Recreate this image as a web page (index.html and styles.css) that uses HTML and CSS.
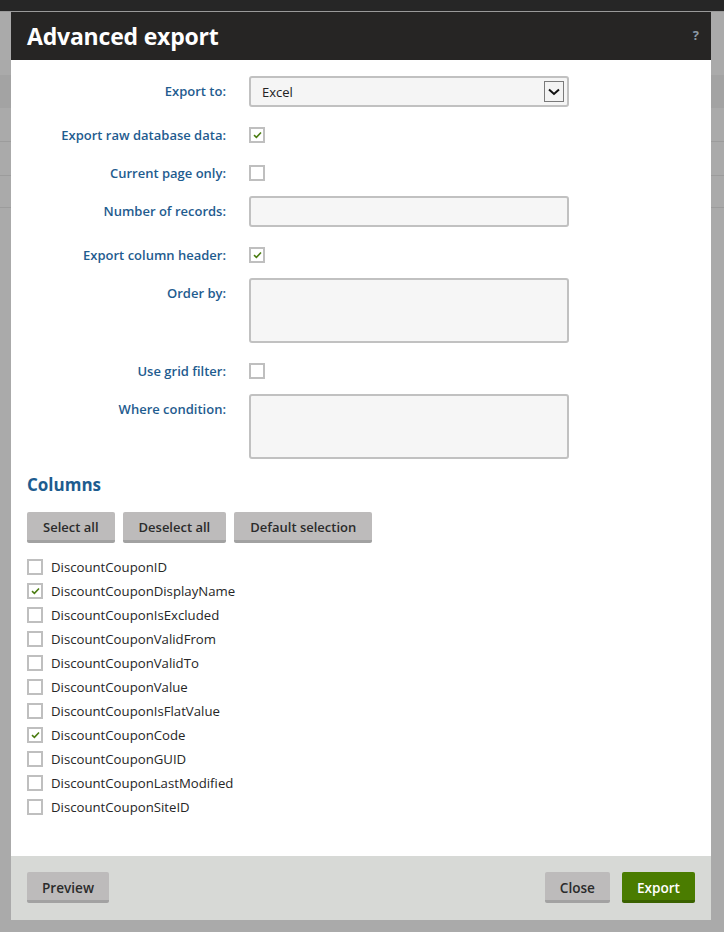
FILE: index.html
```html
<!DOCTYPE html>
<html>
<head>
<meta charset="utf-8">
<link rel="stylesheet" href="styles.css">
</head>
<body>
<div class="topbar"></div>
<div class="modal">
  <div class="mhead">
    <h1 class="title">Advanced export</h1>
    <span class="help">?</span>
  </div>
  <div class="mbody">
    <div class="form">
      <div class="row ctl">
        <label class="lbl">Export to:</label>
        <div class="select"><span class="sel-text">Excel</span><span class="sel-arrow"><svg width="12" height="8" viewBox="0 0 12 8"><path d="M1 1.5 L6 6 L11 1.5" fill="none" stroke="#111" stroke-width="2"/></svg></span></div>
      </div>
      <div class="row chk">
        <label class="lbl">Export raw database data:</label>
        <span class="cb on"><svg width="9" height="8" viewBox="0 0 9 8"><path d="M1 4.2 L3.4 6.4 L8 1.5" fill="none" stroke="#4c7d12" stroke-width="1.6"/></svg></span>
      </div>
      <div class="row chk">
        <label class="lbl">Current page only:</label>
        <span class="cb"></span>
      </div>
      <div class="row ctl">
        <label class="lbl">Number of records:</label>
        <div class="input"></div>
      </div>
      <div class="row chk">
        <label class="lbl">Export column header:</label>
        <span class="cb on"><svg width="9" height="8" viewBox="0 0 9 8"><path d="M1 4.2 L3.4 6.4 L8 1.5" fill="none" stroke="#4c7d12" stroke-width="1.6"/></svg></span>
      </div>
      <div class="row ctl">
        <label class="lbl">Order by:</label>
        <div class="input area"></div>
      </div>
      <div class="row chk">
        <label class="lbl">Use grid filter:</label>
        <span class="cb"></span>
      </div>
      <div class="row ctl">
        <label class="lbl">Where condition:</label>
        <div class="input area"></div>
      </div>
    </div>

    <h2 class="colhead">Columns</h2>
    <div class="btnrow">
      <button class="btn">Select all</button>
      <button class="btn">Deselect all</button>
      <button class="btn">Default selection</button>
    </div>
    <ul class="cols">
      <li><span class="cb"></span>DiscountCouponID</li>
      <li><span class="cb on"><svg width="9" height="8" viewBox="0 0 9 8"><path d="M1 4.2 L3.4 6.4 L8 1.5" fill="none" stroke="#4c7d12" stroke-width="1.6"/></svg></span>DiscountCouponDisplayName</li>
      <li><span class="cb"></span>DiscountCouponIsExcluded</li>
      <li><span class="cb"></span>DiscountCouponValidFrom</li>
      <li><span class="cb"></span>DiscountCouponValidTo</li>
      <li><span class="cb"></span>DiscountCouponValue</li>
      <li><span class="cb"></span>DiscountCouponIsFlatValue</li>
      <li><span class="cb on"><svg width="9" height="8" viewBox="0 0 9 8"><path d="M1 4.2 L3.4 6.4 L8 1.5" fill="none" stroke="#4c7d12" stroke-width="1.6"/></svg></span>DiscountCouponCode</li>
      <li><span class="cb"></span>DiscountCouponGUID</li>
      <li><span class="cb"></span>DiscountCouponLastModified</li>
      <li><span class="cb"></span>DiscountCouponSiteID</li>
    </ul>
  </div>
  <div class="mfoot">
    <button class="fbtn">Preview</button>
    <div class="fright">
      <button class="fbtn">Close</button>
      <button class="fbtn primary">Export</button>
    </div>
  </div>
</div>
</body>
</html>
```
FILE: styles.css
```css
* { box-sizing: border-box; }
html, body { margin: 0; padding: 0; }
body {
  width: 724px;
  height: 932px;
  overflow: hidden;
  font-family: "Open Sans", "Noto Sans", sans-serif;
  background:
    linear-gradient(to bottom,
      transparent 0, transparent 75px,
      #a3a3a3 75px, #a3a3a3 108px,
      transparent 108px, transparent 141px,
      #9c9c9c 141px, #9c9c9c 142px,
      transparent 142px, transparent 175px,
      #9c9c9c 175px, #9c9c9c 176px,
      transparent 176px, transparent 207px,
      #9c9c9c 207px, #9c9c9c 208px,
      transparent 208px),
    #aaaaaa;
}
.topbar {
  height: 12px;
  background: #262626;
  border-bottom: 1px solid #9a9a9a;
}
.modal {
  margin-left: 11px;
  width: 700px;
  height: 908px;
  display: flex;
  flex-direction: column;
  background: #fff;
}
.mhead {
  height: 48px;
  background: #262524;
  display: flex;
  align-items: center;
  justify-content: space-between;
  padding: 0 12px 0 16px;
}
.title {
  margin: 0;
  color: #fff;
  font-size: 23px;
  font-weight: 700;
  letter-spacing: -0.2px;
  line-height: 48px;
}
.help {
  color: #8c99a6;
  font-size: 13px;
  font-weight: 700;
  margin-top: -2px;
}
.mbody {
  flex: 1;
  padding: 16px 16px 0 16px;
}
.form {
  display: flex;
  flex-direction: column;
  gap: 8px;
}
.row {
  display: grid;
  grid-template-columns: 199px 320px;
  column-gap: 23px;
}
.row.ctl { padding-bottom: 5px; align-items: start; }
.row.chk { height: 30px; align-items: center; }
.lbl {
  text-align: right;
  color: #1f5c8f;
  font-size: 13px;
  font-weight: 600;
  line-height: 18px;
}
.row.ctl .lbl { padding-top: 6px; }
.select {
  height: 31px;
  border: 2px solid #c1c1c1;
  border-radius: 3px;
  background: #f5f5f5;
  display: flex;
  align-items: center;
  justify-content: space-between;
  padding: 0 3px 0 11px;
  font-size: 13px;
  color: #222;
}
.sel-arrow {
  width: 20px;
  height: 21px;
  border: 1px solid #7a7a7a;
  background: #f3f3f3;
  display: flex;
  align-items: center;
  justify-content: center;
}
.input {
  height: 31px;
  border: 2px solid #c1c1c1;
  border-radius: 3px;
  background: #f6f6f6;
}
.input.area { height: 65px; }
.cb {
  width: 16px;
  height: 16px;
  border: 2px solid #bfbfbf;
  background: #fff;
  display: inline-flex;
  align-items: center;
  justify-content: center;
  flex: none;
}
.colhead {
  margin: 9px 0 0 0;
  color: #1d5c8f;
  font-size: 17px;
  font-weight: 700;
  line-height: 24px;
}
.btnrow {
  display: flex;
  gap: 8px;
  margin-top: 15px;
}
.btn, .fbtn {
  font-family: "Open Sans", "Noto Sans", sans-serif;
  height: 31px;
  border: none;
  border-bottom: 3px solid #a2a2a2;
  border-radius: 2px;
  background: #bdbbbb;
  color: #2b2b2b;
  font-size: 13px;
  font-weight: 600;
  padding: 3px 16px 0 16px;
  margin: 0;
  line-height: 25px;
}
.cols {
  list-style: none;
  margin: 12px 0 0 0;
  padding: 0;
}
.cols li {
  height: 24px;
  display: flex;
  align-items: center;
  gap: 8px;
  font-size: 13.2px;
  color: #262626;
}
.mfoot {
  height: 64px;
  background: #d7d9d6;
  display: flex;
  justify-content: space-between;
  align-items: flex-start;
  padding: 16px 16px 0 16px;
}
.fbtn { font-size: 13.6px; padding: 3px 15px 0 15px; }
.fright { display: flex; gap: 12px; }
.fbtn.primary {
  background: #4a7c00;
  border-bottom-color: #3a6200;
  color: #fff;
}
```
